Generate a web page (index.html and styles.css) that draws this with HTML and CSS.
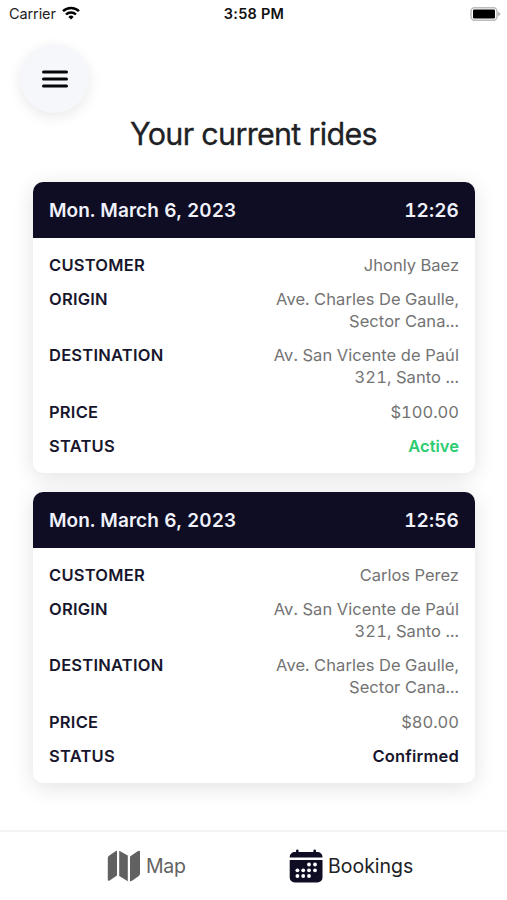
FILE: index.html
```html
<!DOCTYPE html>
<html lang="en">
<head>
<meta charset="utf-8">
<title>Your current rides</title>
<link rel="stylesheet" href="styles.css">
</head>
<body>
<div class="screen">
  <header class="statusbar">
    <div class="carrier"><span class="carrier-name">Carrier</span>
      <svg class="wifi" viewBox="0 0 18 14" width="18" height="14"><path d="M9 13.6 6.4 10.9a3.7 3.7 0 0 1 5.2 0Z"/><path class="arc" d="M1 5.2a11.3 11.3 0 0 1 16 0M4 8.5a7 7 0 0 1 10 0"/></svg>
    </div>
    <span class="clock">3:58 PM</span>
    <svg class="battery" viewBox="0 0 31 14" width="31" height="14"><rect class="shell" x="1" y=".7" width="26" height="12.6" rx="3.5"/><rect x="3" y="2.6" width="22" height="8.8" rx="1.2"/><path class="tip" d="M28.2 4.5 30.6 7l-2.4 2.5Z"/></svg>
  </header>
  <button class="menu" aria-label="Menu">
    <svg viewBox="0 0 26 18" width="26" height="18"><path d="M1.5 2h23M1.5 9h23M1.5 16h23"/></svg>
  </button>
  <h1><span class="title">Your current rides</span></h1>
  <main class="rides">
    <article class="card">
      <div class="card-head"><span class="date">Mon. March 6, 2023</span><span class="time">12:26</span></div>
      <dl>
        <div class="row"><dt>CUSTOMER</dt><dd>Jhonly Baez</dd></div>
        <div class="row"><dt>ORIGIN</dt><dd class="address">Ave. Charles De Gaulle,<br>Sector Cana...</dd></div>
        <div class="row"><dt>DESTINATION</dt><dd class="address">Av. San Vicente de Paúl<br>321, Santo ...</dd></div>
        <div class="row"><dt>PRICE</dt><dd>$100.00</dd></div>
        <div class="row"><dt>STATUS</dt><dd class="active">Active</dd></div>
      </dl>
    </article>
    <article class="card">
      <div class="card-head"><span class="date">Mon. March 6, 2023</span><span class="time">12:56</span></div>
      <dl>
        <div class="row"><dt>CUSTOMER</dt><dd>Carlos Perez</dd></div>
        <div class="row"><dt>ORIGIN</dt><dd class="address">Av. San Vicente de Paúl<br>321, Santo ...</dd></div>
        <div class="row"><dt>DESTINATION</dt><dd class="address">Ave. Charles De Gaulle,<br>Sector Cana...</dd></div>
        <div class="row"><dt>PRICE</dt><dd>$80.00</dd></div>
        <div class="row"><dt>STATUS</dt><dd class="confirmed">Confirmed</dd></div>
      </dl>
    </article>
  </main>
  <nav class="tabs">
    <a class="tab tab-map">
      <svg viewBox="0 0 34 32" width="34" height="32"><path d="M10 .8V25.500L2.600 30.500Q.8 31.500.8 29.500V8Q.8 6.600 2 5.700L8.500 1.200Q9.300.6 10 .8ZM12.200.8 20.800 5.600V31.200L12.200 26ZM23 6.500 31 1Q33 0 33 2V23.500Q33 25 31.800 25.900L25 30.800Q24 31.500 23 31.200Z"/></svg>
      <span>Map</span>
    </a>
    <a class="tab tab-bookings">
      <svg viewBox="0 0 34 34" width="34" height="34"><path d="M7 3V1.800a1.300 1.300 0 0 1 2.600 0V3h14.800V1.800a1.300 1.300 0 0 1 2.600 0V3h1.500a5 5 0 0 1 5 5v.5H.7V8a5 5 0 0 1 5-5ZM.7 11h32.800v17.500a5 5 0 0 1-5 5H5.700a5 5 0 0 1-5-5Z"/><g class="dots"><circle cx="20" cy="15.500" r="1.900"/><circle cx="26" cy="15.500" r="1.900"/><circle cx="8.400" cy="21.300" r="1.900"/><circle cx="14.200" cy="21.300" r="1.900"/><circle cx="20" cy="21.300" r="1.900"/><circle cx="26" cy="21.300" r="1.900"/><circle cx="8.400" cy="27" r="1.900"/><circle cx="14.200" cy="27" r="1.900"/><circle cx="20" cy="27" r="1.900"/></g></svg>
      <span>Bookings</span>
    </a>
  </nav>
</div>
</body>
</html>
```
FILE: styles.css
```css
* { box-sizing: border-box; }
body { margin: 0; background: #fff; font-family: Inter, "Liberation Sans", sans-serif; }
.screen { width: 507px; height: 900px; display: flex; flex-direction: column; overflow: hidden; }
.statusbar { height: 27px; flex: none; display: grid; grid-template-columns: 1fr auto 1fr; align-items: center; padding: 0 6px 0 9px; font-size: 14.500px; }
.carrier { display: flex; align-items: center; gap: 6px; color: #222; }
.carrier-name { letter-spacing: -.1px; }
.wifi { margin-top: -2px; }
.wifi .arc { fill: none; stroke: #000; stroke-width: 2.500; }
.clock { font-weight: 600; color: #111; letter-spacing: .25px; margin-right: 2px; }
.battery { justify-self: end; }
.shell { fill: #fff; stroke: #bbb; stroke-width: 1.500; }
.tip { fill: #aaa; }
.menu { width: 69px; height: 69px; flex: none; margin: 17px 0 0 20px; padding: 0; border: 0; border-radius: 50%; background: #f5f7fb; display: flex; align-items: center; justify-content: center; box-shadow: 0 4px 14px rgba(0,0,0,.09); }
.menu svg { stroke: #050508; stroke-width: 3; stroke-linecap: round; }
h1 { margin: 1px 0 0; height: 40px; flex: none; font-size: 30.500px; line-height: 40px; font-weight: 400; text-align: center; color: #202124; -webkit-text-stroke: .3px #202124; }
.title { letter-spacing: -.7px; }
.rides { margin: 28px 32px 0 33px; display: flex; flex-direction: column; gap: 19px; font-variant-numeric: tabular-nums; }
.card { height: 291px; border-radius: 10px; background: #fff; box-shadow: 0 4px 22px rgba(0,0,0,.12); overflow: hidden; }
.card-head { height: 56px; padding: 0 16px; display: flex; justify-content: space-between; align-items: center; background: #0e0d24; color: #f0f1fa; font-size: 19px; font-weight: 600; }
.date { letter-spacing: .08px; }
.time { letter-spacing: .1px; }
dl { margin: 0; padding: 16px; display: flex; flex-direction: column; gap: 12.200px; }
.row { display: flex; justify-content: space-between; font-size: 16.500px; line-height: 22px; }
dt { color: #17162d; font-weight: 600; letter-spacing: .23px; }
dd { margin: 0; text-align: right; color: #737373; }
.address { letter-spacing: .07px; }
.row .active { color: #2ecc71; font-weight: 600; }
.row .confirmed { color: #17162d; font-weight: 600; letter-spacing: .2px; }
.tabs { margin-top: auto; height: 70px; flex: none; border-top: 2px solid #f3f3f3; display: grid; grid-template-columns: 1fr 1fr; }
.tab { display: flex; align-items: center; gap: 5px; font-size: 19.500px; color: #636363; }
.tab-map { padding-left: 107px; letter-spacing: -.3px; }
.tab-bookings { padding-left: 35.500px; color: #202124; }
.tab svg { fill: #616161; }
.tab-bookings svg { fill: #0e0d24; }
.tab .dots { fill: #fff; }
```
